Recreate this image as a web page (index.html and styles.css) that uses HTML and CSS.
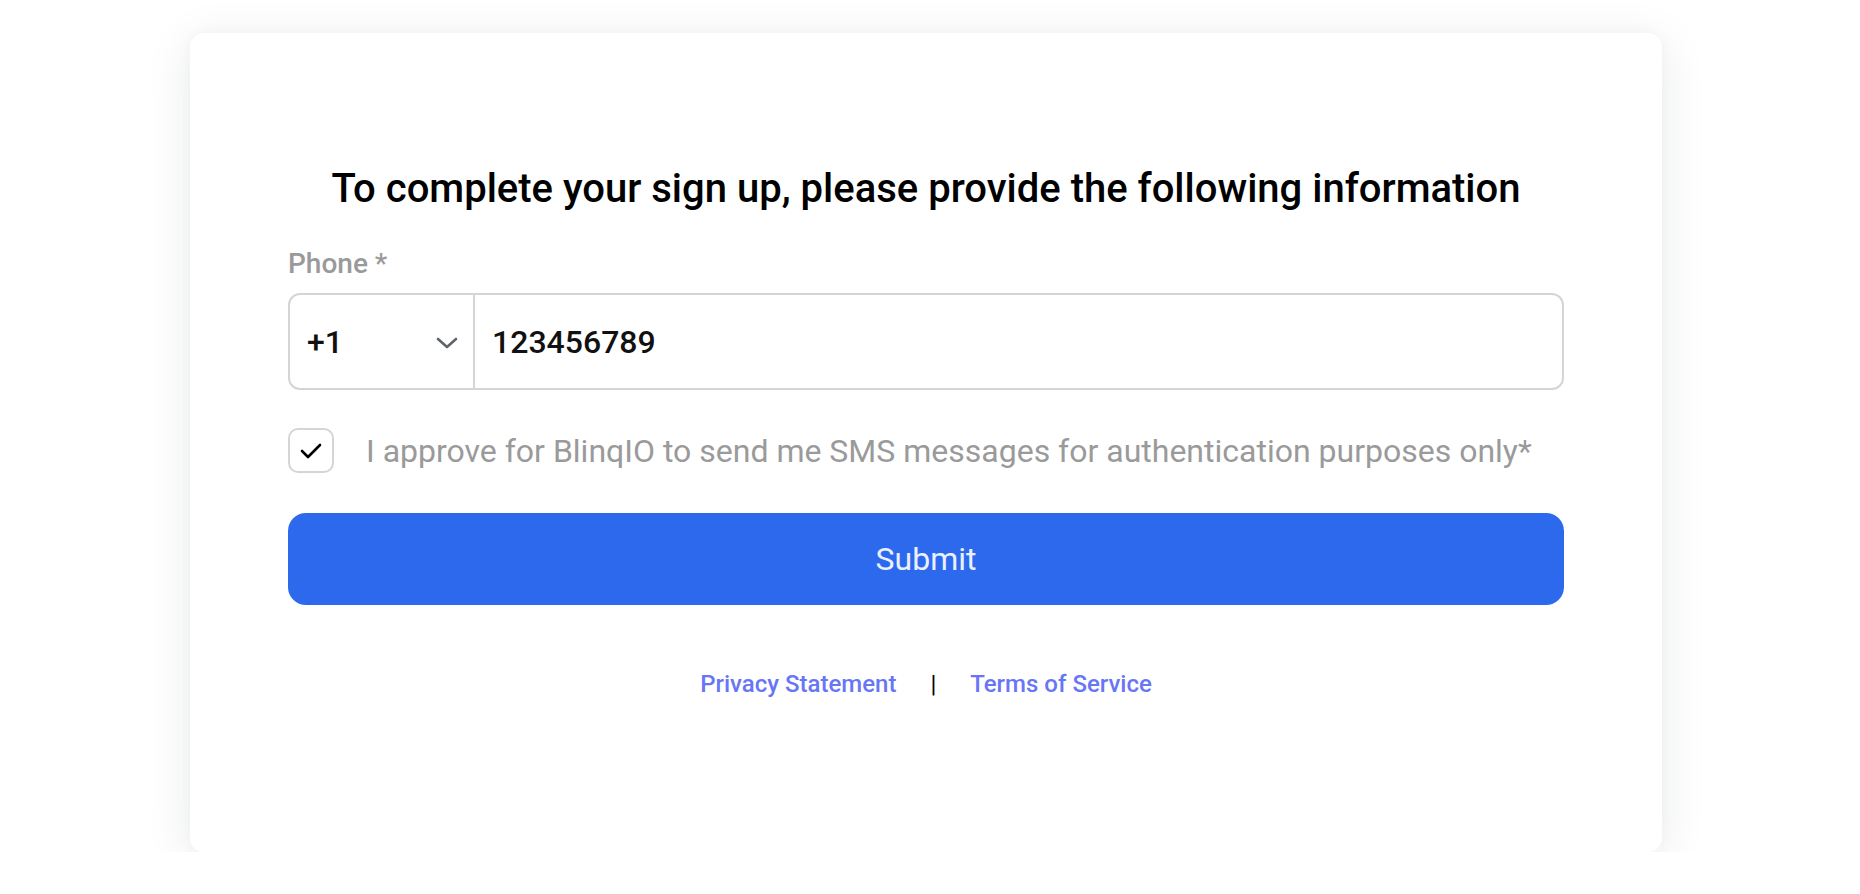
FILE: index.html
```html
<!DOCTYPE html>
<html lang="en">
<head>
<meta charset="utf-8">
<title>Complete sign up</title>
<link rel="stylesheet" href="styles.css">
</head>
<body>
<div class="page">
  <main class="card">
    <h1 class="title">To complete your sign up, please provide the following information</h1>
    <form class="form">
      <label class="label">Phone *</label>
      <div class="phone">
        <div class="code">
          <span class="code-value">+1</span>
          <svg class="chevron" width="24" height="12" viewBox="0 0 24 12" aria-hidden="true"><polyline points="3,2 12,10 21,2" fill="none" stroke="#5f646c" stroke-width="2.6" stroke-linecap="round" stroke-linejoin="round"/></svg>
        </div>
        <div class="number">123456789</div>
      </div>
      <div class="consent">
        <span class="checkbox">
          <svg width="22" height="16" viewBox="0 0 22 16" aria-hidden="true"><polyline points="2,8 8,14 20,2" fill="none" stroke="#000" stroke-width="2.6" stroke-linecap="round" stroke-linejoin="round"/></svg>
        </span>
        <span class="consent-text">I approve for BlinqIO to send me SMS messages for authentication purposes only*</span>
      </div>
      <button type="button" class="submit">Submit</button>
    </form>
    <nav class="links">
      <a class="link" href="#">Privacy Statement</a>
      <span class="sep">|</span>
      <a class="link" href="#">Terms of Service</a>
    </nav>
  </main>
</div>
</body>
</html>
```

FILE: styles.css
```css
* { box-sizing: border-box; }
html, body { margin: 0; padding: 0; background: #ffffff; }
body { font-family: Roboto, "Liberation Sans", Arial, sans-serif; }

.page {
  padding-top: 33px;
  padding-left: 190px;
}

.card {
  width: 1472px;
  height: 819px;
  background: #ffffff;
  border-radius: 14px;
  box-shadow: 0 8px 48px rgba(20, 30, 60, 0.09), 0 0 14px rgba(20, 30, 60, 0.03);
  padding: 0 98px;
  display: flex;
  flex-direction: column;
}

.title {
  margin: 132px 0 0;
  font-size: 40px;
  line-height: 47px;
  font-weight: 500;
  color: #000;
  text-align: center;
  letter-spacing: 0;
}

.form {
  display: flex;
  flex-direction: column;
}

.label {
  margin-top: 35px;
  font-size: 28px;
  line-height: 33px;
  font-weight: 500;
  color: #9a9a9a;
}

.phone {
  margin-top: 13px;
  height: 97px;
  border: 2px solid #d3d5d9;
  border-radius: 12px;
  display: flex;
}

.code {
  width: 185px;
  border-right: 2px solid #d3d5d9;
  display: flex;
  align-items: center;
  justify-content: space-between;
  padding: 0 14px 0 17px;
}

.code-value, .number {
  font-size: 32px;
  font-weight: 500;
  color: #111;
}

.chevron { display: block; margin-top: 2px; }

.number {
  flex: 1;
  display: flex;
  align-items: center;
  padding-left: 17px;
}

.consent {
  margin-top: 38px;
  height: 45px;
  display: flex;
  align-items: center;
  gap: 32px;
}

.checkbox {
  width: 46px;
  height: 45px;
  border: 2px solid #d3d5d9;
  border-radius: 10px;
  display: flex;
  align-items: center;
  justify-content: center;
  flex: none;
}

.consent-text {
  font-size: 32px;
  color: #9a9a9a;
  font-weight: 400;
}

.submit {
  margin-top: 40px;
  height: 92px;
  border: none;
  border-radius: 18px;
  background: #2d69ed;
  color: #e9f0ff;
  font-family: inherit;
  font-size: 32px;
  font-weight: 400;
  cursor: pointer;
}

.links {
  margin-top: 65px;
  display: flex;
  justify-content: center;
  align-items: center;
  gap: 34px;
  font-size: 24px;
  line-height: 28px;
}

.link {
  color: #6876f6;
  font-weight: 500;
  text-decoration: none;
}

.sep {
  color: #000;
  font-weight: 400;
}
```
